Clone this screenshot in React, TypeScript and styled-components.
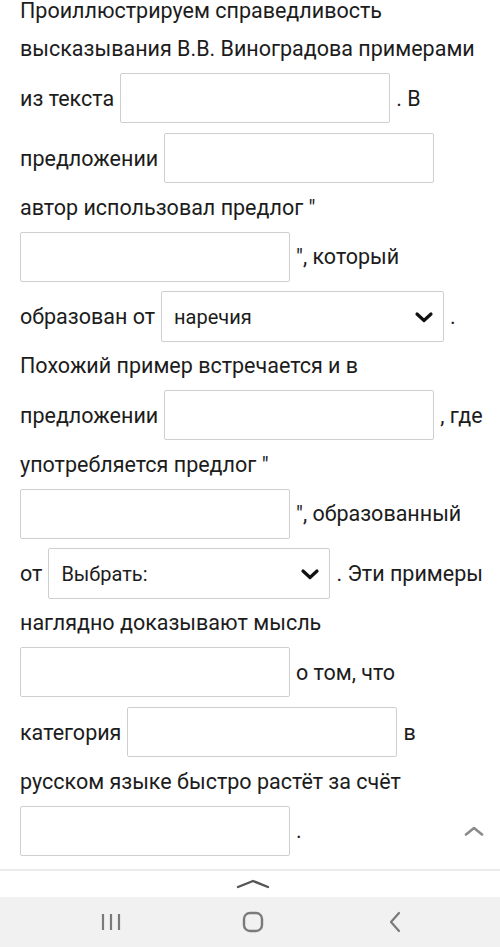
import styled, { createGlobalStyle } from 'styled-components';

const GlobalStyle = createGlobalStyle`
  body {
    margin: 0;
    background: #ffffff;
    font-family: Roboto, 'Noto Sans', sans-serif;
  }
`;

const Screen = styled.div`
  width: 500px;
  height: 947px;
  display: flex;
  flex-direction: column;
  overflow: hidden;
  position: relative;
`;

const Content = styled.div`
  flex: 1;
  overflow: hidden;
  position: relative;
`;

const Paragraph = styled.div`
  margin-top: -9px;
  padding: 0 20px;
  color: #1c1c1c;
  font-size: 21.5px;
`;

const Row = styled.div<{ $tall?: boolean }>`
  display: flex;
  align-items: center;
  gap: 6px;
  height: ${(p) => (p.$tall ? 60 : 38.5)}px;
  white-space: pre;
`;

const Blank = styled.input`
  box-sizing: border-box;
  flex: none;
  width: 270px;
  height: 50px;
  border: 1px solid #cfcfcf;
  border-radius: 2px;
  background: #fff;
  padding: 0 10px;
  font: inherit;
  outline: none;
`;

const SelectBox = styled.div<{ $w: number }>`
  box-sizing: border-box;
  flex: none;
  width: ${(p) => p.$w}px;
  height: 51px;
  border: 1px solid #cfcfcf;
  border-radius: 2px;
  display: flex;
  align-items: center;
  justify-content: space-between;
  padding: 0 9px 0 12px;
  font-size: 20px;
  color: #1c1c1c;
`;

const ScrollTop = styled.div`
  position: absolute;
  right: 14px;
  top: 824px;
  width: 24px;
  height: 14px;
  display: flex;
  align-items: center;
  justify-content: center;
`;

const Sheet = styled.div`
  height: 26px;
  border-top: 2px solid #ebebeb;
  background: #fff;
  display: flex;
  justify-content: center;
  align-items: center;
  padding-left: 6px;
`;

const NavBar = styled.div`
  height: 50px;
  background: #f1f1f1;
  display: grid;
  grid-template-columns: repeat(3, 142px);
  justify-content: center;
  align-items: center;
  justify-items: center;
  padding-left: 6px;
`;

function Chevron() {
  return (
    <svg width="20" height="12" viewBox="0 0 20 12">
      <path d="M3 3 L10 9.5 L17 3" fill="none" stroke="#111" strokeWidth="3.2" strokeLinecap="round" strokeLinejoin="round" />
    </svg>
  );
}

function Select({ value, width }: { value: string; width: number }) {
  return (
    <SelectBox $w={width}>
      <span>{value}</span>
      <Chevron />
    </SelectBox>
  );
}

export default function App() {
  return (
    <Screen>
      <GlobalStyle />
      <Content>
        <Paragraph>
          <Row>Проиллюстрируем справедливость</Row>
          <Row>высказывания В.В. Виноградова примерами</Row>
          <Row $tall>
            из текста
            <Blank />. В
          </Row>
          <Row $tall>
            предложении
            <Blank />
          </Row>
          <Row>автор использовал предлог "</Row>
          <Row $tall>
            <Blank />", который
          </Row>
          <Row $tall>
            образован от
            <Select value="наречия" width={283} />.
          </Row>
          <Row>Похожий пример встречается и в</Row>
          <Row $tall>
            предложении
            <Blank />, где
          </Row>
          <Row>употребляется предлог "</Row>
          <Row $tall>
            <Blank />", образованный
          </Row>
          <Row $tall>
            от
            <Select value="Выбрать:" width={282} />. Эти примеры
          </Row>
          <Row>наглядно доказывают мысль</Row>
          <Row $tall>
            <Blank />о том, что
          </Row>
          <Row $tall>
            категория
            <Blank />в
          </Row>
          <Row>русском языке быстро растёт за счёт</Row>
          <Row $tall>
            <Blank />.
          </Row>
        </Paragraph>
        <ScrollTop>
          <svg width="20" height="10" viewBox="0 0 20 10">
            <path d="M2 8.5 L10 2 L18 8.5" fill="none" stroke="#8a8a8a" strokeWidth="2.6" strokeLinecap="round" strokeLinejoin="round" />
          </svg>
        </ScrollTop>
      </Content>
      <Sheet>
        <svg width="34" height="10" viewBox="0 0 34 10">
          <path d="M2 8 L17 2 L32 8" fill="none" stroke="#555" strokeWidth="2.4" strokeLinecap="round" strokeLinejoin="round" />
        </svg>
      </Sheet>
      <NavBar>
        <svg width="22" height="20" viewBox="0 0 22 20">
          <path d="M3 2 V18 M11 2 V18 M19 2 V18" stroke="#7a7a7a" strokeWidth="2.2" />
        </svg>
        <svg width="22" height="22" viewBox="0 0 22 22">
          <rect x="2" y="2" width="18" height="18" rx="6" fill="none" stroke="#7a7a7a" strokeWidth="2.4" />
        </svg>
        <svg width="14" height="22" viewBox="0 0 14 22">
          <path d="M11 2 L3 11 L11 20" fill="none" stroke="#7a7a7a" strokeWidth="2.2" strokeLinecap="round" strokeLinejoin="round" />
        </svg>
      </NavBar>
    </Screen>
  );
}
